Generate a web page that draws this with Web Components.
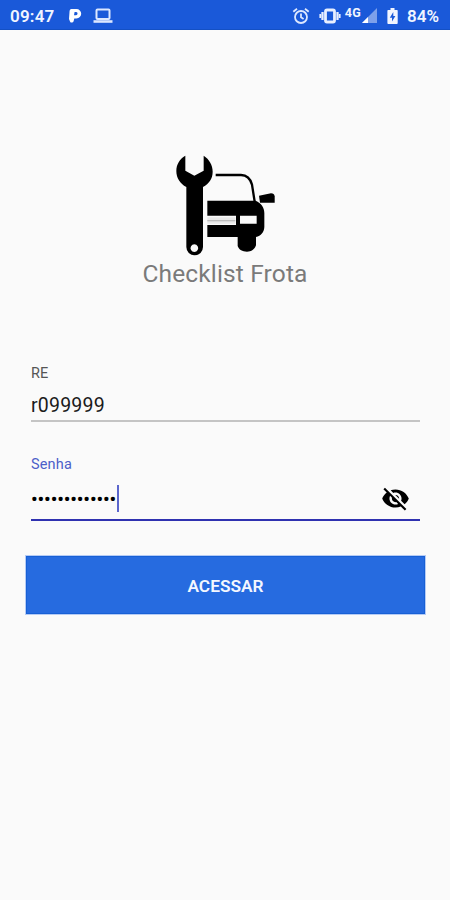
<!DOCTYPE html>
<html lang="pt-BR">
<head>
<meta charset="utf-8">
<meta name="viewport" content="width=device-width, initial-scale=1">
<title>Checklist Frota</title>
<style>
    html, body { height: 100%; }
    body { margin: 0; background: #fafafa; font-family: Roboto, "Liberation Sans", sans-serif; overflow: hidden; }
</style>
</head>
<body>
<login-screen></login-screen>

<script>
/** Attaches an open shadow root filled with the given markup. */
function render(host, html) {
    const tpl = document.createElement('template');
    tpl.innerHTML = html;
    host.attachShadow({ mode: 'open' }).appendChild(tpl.content.cloneNode(true));
}

/**
 * Android status bar.
 */
class StatusBar extends HTMLElement {
    constructor() {
        super();
        render(this, `
    <style>
        :host { display: flex; justify-content: space-between; box-sizing: border-box; height: 30px; padding: 2px 9px 0 10px; background: #1a59d9; color: #f1f5ff; border-bottom: 1px solid #1450c4; font-size: 17px; font-weight: 600; line-height: 28px; }
        .side { display: flex; align-items: center; height: 27px; }
        svg { display: block; flex: none; }
        .time { width: 58px; letter-spacing: 0.2px; }
        .net { font-size: 12.5px; font-weight: 700; line-height: 12px; margin: -6px 1px 0 4px; letter-spacing: 0.3px; }
        .level { margin-left: 9px; width: 34px; letter-spacing: 0; }
    </style>
    <div class="side">
        <span class="time">09:47</span>
        <svg width="14" height="15" viewBox="0 0 14 15"><path fill="#fff" fill-rule="evenodd" d="M3.300 1H8.500a4.700 4.700 0 0 1 0 9.400H6.300L5.600 13.200a1.900 1.900 0 0 1-3.600.2L1 11 1.600 2.700Q1.900 1 3.300 1ZM6.600 4.100 6 7.300H7.800a1.600 1.600 0 0 0 .3-3.200Z"/></svg>
        <svg style="margin-left:11px" width="20" height="16" viewBox="0 0 20 16"><g fill="none" stroke="#dce7ff"><rect x="3.500" y="1.500" width="13" height="9.500" rx="1" stroke-width="2"/><path d="M.5 13.500h19" stroke-width="2.600"/></g></svg>
    </div>
    <div class="side">
        <svg width="18" height="18" viewBox="0 0 18 18"><g fill="none" stroke="#dce7ff" stroke-width="1.800"><circle cx="9" cy="10" r="6"/><path d="M9 6.500V10.300l2.600 1.600M1.300 4.800 5 1.700M16.700 4.800 13 1.700"/></g></svg>
        <svg style="margin-left:9px" width="22" height="16" viewBox="0 0 22 16"><g fill="none" stroke="#e8efff"><rect x="6.500" y="2" width="9" height="12" rx="1.500" stroke-width="2.800"/><path d="M3.500 4v8M18.500 4v8" stroke-width="2.300"/><path d="M1.300 6v4M20.700 6v4" stroke-width="1.800"/></g></svg>
        <span class="net">4G</span>
        <svg width="15" height="15" viewBox="0 0 15 15"><path fill="#7da0ea" d="M15 0v15H0Z"/><path fill="#fff" d="M6 9v6H0Z"/></svg>
        <svg style="margin-left:10px" width="11" height="16" viewBox="0 0 11 16"><path fill="#f1f5ff" d="M3.500 0h4v2H10q.7 0 .7.800v12.200q0 .9-.8.900H1.200q-.8 0-.8-.9V2.800Q.4 2 1.100 2h2.400Z"/><path fill="#1a59d9" d="M6.300 4 2.800 9.700H5v3.800L8.400 8H6.300Z"/></svg>
        <span class="level">84%</span>
    </div>`);
    }
}
customElements.define('status-bar', StatusBar);

/**
 * Logo with the wrench and the car, and the app name in the slot.
 */
class AppBrand extends HTMLElement {
    constructor() {
        super();
        render(this, `
    <style>
        :host { display: flex; flex-direction: column; align-items: center; color: #7a7a7a; font-size: 24.500px; line-height: 28px; letter-spacing: 0.15px; }
        svg { display: block; }
    </style>
    <svg width="120" height="115" viewBox="0 0 360 345">
        <path fill-rule="evenodd" d="M61 32V77L88 92 116 77V32C133 43 143 60 143 80 143 101 132 116 114 126V306A25 25 0 0 1 64 306V126C45 116 34 99 34 78 34 58 44 42 61 32ZM88 298a11.500 11.500 0 1 0 .1 0Z"/>
        <path d="M152 90H228C247 90 256 101 261 119L269 170" fill="none" stroke="#000" stroke-width="7"/>
        <path d="M282 152 318 145Q328 145 329 154V173H285Z"/>
        <path fill-rule="evenodd" d="M127 167H272C289 174 298 188 298 204V246C297 263 288 272 273 276V301C269 313 259 320 246 320 232 320 222 314 218 303V276H127V240H213V212H127ZM225 212V236H275V212Z"/>
        <path d="M127 217H211V236H127Z" fill="#e9e9e9"/>
        <path d="M127 227H211" stroke="#bdbdbd" stroke-width="4"/>
    </svg>
    <slot></slot>`);
    }
}
customElements.define('app-brand', AppBrand);

/**
 * Underlined text field. Takes label and value; "focused" shows the caret,
 * and the slot holds a trailing icon.
 */
class TextField extends HTMLElement {
    constructor() {
        super();
        render(this, `
    <style>
        :host { display: block; box-sizing: border-box; height: 57px; border-bottom: 2px solid #c4c4c4; color: #1b1b1b; }
        .label { font-size: 14.500px; line-height: 18px; color: #555; }
        .row { display: flex; align-items: center; height: 28px; margin-top: 9px; }
        .value { font-size: 19.500px; line-height: 28px; letter-spacing: 0.22px; }
        .caret { display: none; width: 2px; height: 27px; background: #5b66cc; }
        slot { display: block; margin-left: auto; }
        :host([focused]) { height: 65px; border-bottom: 2px solid #2f31b0; }
        :host([focused]) .label { color: #4c5fc9; letter-spacing: 0.15px; }
        :host([focused]) .row { margin-top: 9px; height: 30px; }
        :host([focused]) .caret { display: block; }
        :host([secret]) .value { width: 86px; white-space: nowrap; color: #000; font-size: 19px; line-height: 30px; font-weight: 500; letter-spacing: -0.1px; padding-top: 3px; }
    </style>
    <div class="label"></div>
    <div class="row"><span class="value"></span><span class="caret"></span><slot></slot></div>`);
    }

    /**/
    connectedCallback() {
        this.shadowRoot.querySelector('.label').textContent = this.getAttribute('label');
        this.shadowRoot.querySelector('.value').textContent = this.getAttribute('value');
    }
}
customElements.define('text-field', TextField);

class EyeOff extends HTMLElement {
    constructor() {
        super();
        render(this, `
    <style>
        :host { display: block; margin-right: 10px; }
        svg { display: block; }
    </style>
    <svg width="29" height="29" viewBox="0 0 24 24"><path d="M12 7c2.760 0 5 2.240 5 5 0 .65-.13 1.260-.36 1.830l2.920 2.920c1.510-1.260 2.700-2.890 3.430-4.750-1.730-4.390-6-7.500-11-7.500-1.400 0-2.740.25-3.980.7l2.160 2.160C10.740 7.130 11.350 7 12 7zM2 4.270l2.280 2.280.46.46C3.080 8.300 1.780 10.020 1 12c1.730 4.390 6 7.500 11 7.500 1.550 0 3.030-.3 4.380-.84l.42.42L19.730 22 21 20.730 3.270 3 2 4.270zM7.530 9.800l1.550 1.550c-.05.21-.08.43-.08.65 0 1.660 1.340 3 3 3 .22 0 .44-.03.65-.08l1.550 1.550c-.67.33-1.410.53-2.200.53-2.760 0-5-2.240-5-5 0-.79.2-1.530.53-2.200zm4.310-.78l3.150 3.150.02-.16c0-1.660-1.340-3-3-3l-.17.01z"/></svg>`);
    }
}
customElements.define('eye-off', EyeOff);

/**
 * Full-width action button.
 */
class ActionButton extends HTMLElement {
    constructor() {
        super();
        render(this, `
    <style>
        :host { display: block; }
        button { display: block; width: 100%; height: 58px; padding: 1px 0 0; border: 1px solid #1760d5; outline: 1px solid #b5cbf5; background: #266be0; color: #f3f7ff; font: 600 17.300px Roboto, "Liberation Sans", sans-serif; }
    </style>
    <button><slot></slot></button>`);
    }
}
customElements.define('action-button', ActionButton);

/**
 * The whole login page.
 */
class LoginScreen extends HTMLElement {
    constructor() {
        super();
        render(this, `
    <style>
        :host { display: flex; flex-direction: column; height: 100vh; background: #fafafa; }
        app-brand { margin-top: 115px; }
        form { display: flex; flex-direction: column; margin: 77px 25px 0 26px; }
        text-field { margin: 0 5px; }
        text-field + text-field { margin-top: 34px; }
        action-button { margin-top: 35px; }
    </style>
    <status-bar></status-bar>
    <app-brand>Checklist Frota</app-brand>
    <form onsubmit="return false">
        <text-field label="RE" value="r099999"></text-field>
        <text-field label="Senha" value="•••••••••••••" focused secret><eye-off></eye-off></text-field>
        <action-button>ACESSAR</action-button>
    </form>`);
    }
}
customElements.define('login-screen', LoginScreen);
</script>
</body>
</html>
